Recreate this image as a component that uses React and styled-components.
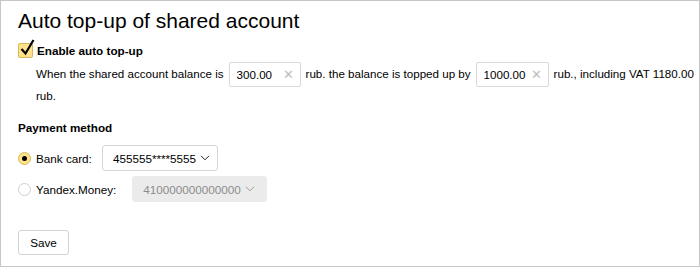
import React from 'react'
import styled, { createGlobalStyle } from 'styled-components'

const Global = createGlobalStyle`
  html, body { margin: 0; padding: 0; background: #fff; }
  body { font-family: "Liberation Sans", Arial, sans-serif; color: #000; }
`

const Frame = styled.div`
  box-sizing: border-box;
  width: 700px;
  height: 267px;
  border: 1px solid #c6c6c6;
  padding: 6px 3px 0 17px;
  overflow: hidden;
`

const Title = styled.h1`
  margin: 0;
  font-size: 21px;
  font-weight: 400;
  line-height: 28px;
`

const CheckRow = styled.label`
  display: flex;
  align-items: center;
  gap: 4px;
  margin-top: 7px;
  font-size: 11.7px;
  font-weight: 700;
  height: 16px;
`

const CheckBox = styled.span`
  position: relative;
  width: 13px;
  height: 13px;
  border: 1px solid #d4b85a;
  border-radius: 2px;
  background: #ffe38a;
  flex: none;
  svg {
    position: absolute;
    left: 1px;
    top: -5px;
  }
`

const Sentence = styled.p`
  margin: 5px 0 0 18px;
  font-size: 11.6px;
  line-height: 22px;
`

const Field = styled.span`
  display: inline-flex;
  align-items: center;
  justify-content: space-between;
  box-sizing: border-box;
  width: ${p => p.w}px;
  height: 25px;
  margin: -2px 5px -2px 5px;
  padding: 0 6px 0 7px;
  border: 1px solid #d9d9d9;
  border-radius: 2px;
  vertical-align: middle;
  line-height: 23px;
`

const Clear = styled.span`
  color: #bdbdbd;
  font-size: 13px;
`

const Section = styled.h2`
  margin: 12px 0 0;
  font-size: 11.7px;
  font-weight: 700;
  line-height: 18px;
`

const Options = styled.div`
  display: flex;
  flex-direction: column;
  gap: 5px;
  margin-top: 8px;
  font-size: 11.7px;
`

const Option = styled.div`
  display: flex;
  align-items: center;
  height: 26px;
`

const Radio = styled.span`
  box-sizing: border-box;
  width: 13px;
  height: 13px;
  border-radius: 50%;
  border: 1px solid ${p => (p.on ? '#d4b85a' : '#cfcfcf')};
  background: ${p => (p.on ? '#ffe38a' : '#fff')};
  display: flex;
  align-items: center;
  justify-content: center;
  margin-right: 5px;
  &::after {
    content: '';
    width: 5px;
    height: 5px;
    border-radius: 50%;
    background: ${p => (p.on ? '#000' : 'transparent')};
  }
`

const Label = styled.span`
  padding-right: ${p => p.pr}px;
`

const Select = styled.span`
  box-sizing: border-box;
  display: inline-flex;
  align-items: center;
  gap: 4px;
  height: 26px;
  padding: 0 ${p => (p.disabled ? 11 : 7)}px 0 10px;
  border: 1px solid ${p => (p.disabled ? '#ebebeb' : '#d6d6d6')};
  border-radius: 3px;
  background: ${p => (p.disabled ? '#ebebeb' : '#fff')};
  color: ${p => (p.disabled ? '#8c8c8c' : '#000')};
  svg { stroke: ${p => (p.disabled ? '#9a9a9a' : '#222')}; }
`

const Button = styled.button`
  margin-top: 28px;
  box-sizing: border-box;
  height: 25px;
  width: 51px;
  border: 1px solid #d3d3d3;
  border-radius: 3px;
  background: #fff;
  font-family: inherit;
  font-size: 11.7px;
  color: #000;
`

const Chevron = () => (
  <svg width="10" height="6" viewBox="0 0 10 6" fill="none" strokeWidth="1">
    <path d="M1 0.8l4 4 4-4" />
  </svg>
)

export default function App() {
  return (
    <>
      <Global />
      <Frame>
        <Title>Auto top-up of shared account</Title>
        <CheckRow>
          <CheckBox>
            <svg width="15" height="17" viewBox="0 0 15 17">
              <path d="M1.5 10l4 4.5L13.5 1" fill="none" stroke="#000" strokeWidth="2.2" />
            </svg>
          </CheckBox>
          Enable auto top-up
        </CheckRow>
        <Sentence>
          <span>When the shared account balance is</span>
          <Field w={72}>300.00<Clear>✕</Clear></Field>
          <span>rub. the balance is topped up by</span>
          <Field w={73}>1000.00<Clear>✕</Clear></Field>
          <span>rub., including VAT 1180.00</span> <span>rub.</span>
        </Sentence>
        <Section>Payment method</Section>
        <Options>
          <Option>
            <Radio on />
            <Label pr={10}>Bank card:</Label>
            <Select>455555****5555<Chevron /></Select>
          </Option>
          <Option>
            <Radio />
            <Label pr={16}>Yandex.Money:</Label>
            <Select disabled>410000000000000<Chevron /></Select>
          </Option>
        </Options>
        <Button>Save</Button>
      </Frame>
    </>
  )
}
